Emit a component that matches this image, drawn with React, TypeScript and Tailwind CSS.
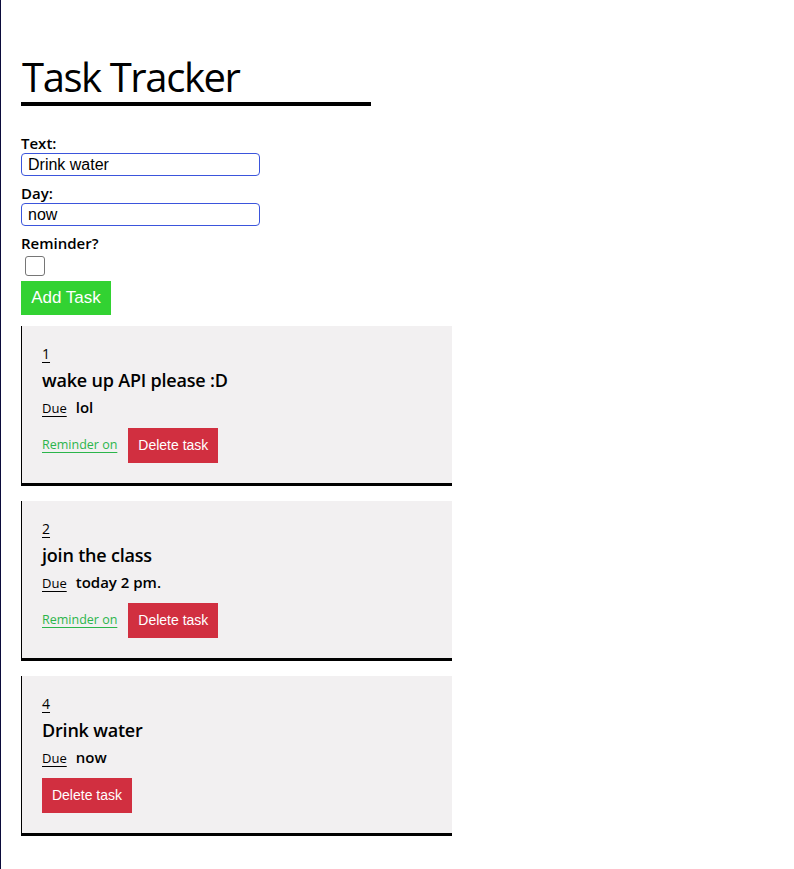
import { useState } from "react"

interface Task {
  id: number
  text: string
  day: string
  reminder: boolean
}

const initialTasks: Task[] = [
  { id: 1, text: "wake up API please :D", day: "lol", reminder: true },
  { id: 2, text: "join the class", day: "today 2 pm.", reminder: true },
  { id: 4, text: "Drink water", day: "now", reminder: false },
]

function TaskCard({ task, onDelete }: { task: Task; onDelete: (id: number) => void }) {
  return (
    <div className="w-[431px] h-[160px] bg-[#f2f0f1] border-l border-l-black border-b-[3px] border-b-black pl-[20px] pt-[19px]">
      <div className="text-[14px] leading-[18px] underline underline-offset-[3px]">{task.id}</div>
      <h3 className="mt-[5px] text-[18px] leading-[24px] font-semibold tracking-[-0.2px]">{task.text}</h3>
      <div className="mt-[4px] flex items-baseline gap-[9px]">
        <span className="text-[13px] underline underline-offset-[3px]">Due</span>
        <span className="text-[15px] font-semibold">{task.day}</span>
      </div>
      <div className="mt-[9px] flex items-center gap-[11px]">
        {task.reminder && (
          <span className="text-[12.5px] text-[#2bb54b] underline underline-offset-[3px]">Reminder on</span>
        )}
        <button
          onClick={() => onDelete(task.id)}
          className="h-[35px] w-[90px] bg-[#d12f40] text-white text-[14px] font-['Liberation_Sans',Arial,sans-serif]"
        >
          Delete task
        </button>
      </div>
    </div>
  )
}

export default function App() {
  const [text, setText] = useState("Drink water")
  const [day, setDay] = useState("now")
  const [reminder, setReminder] = useState(false)
  const [tasks, setTasks] = useState<Task[]>(initialTasks)

  return (
    <div className="min-h-[869px] border-l border-l-[#0b0b3b] pl-[20px] pt-[55px] text-black font-['Open_Sans','Noto_Sans',sans-serif]">
      <h1 className="text-[40px] leading-[44px] tracking-[-1.4px] w-[350px] border-b-4 border-black pb-[3px] pl-[1px]">Task Tracker</h1>

      <form className="mt-[28px]" onSubmit={(e) => e.preventDefault()}>
        <label className="block text-[15px] leading-[18px] font-semibold">Text:</label>
        <input
          value={text}
          onChange={(e) => setText(e.target.value)}
          className="block mt-[1px] w-[239px] h-[23px] border border-[#3b55dc] rounded-[4px] px-[6px] text-[16px] font-['Liberation_Sans',Arial,sans-serif] outline-none"
        />
        <label className="block mt-[8px] text-[15px] leading-[18px] font-semibold">Day:</label>
        <input
          value={day}
          onChange={(e) => setDay(e.target.value)}
          className="block mt-[1px] w-[239px] h-[23px] border border-[#3b55dc] rounded-[4px] px-[6px] text-[16px] font-['Liberation_Sans',Arial,sans-serif] outline-none"
        />
        <label className="block mt-[8px] text-[15px] leading-[18px] font-semibold">Reminder?</label>
        <input
          type="checkbox"
          checked={reminder}
          onChange={(e) => setReminder(e.target.checked)}
          className="block mt-[4px] ml-[4px] w-[20px] h-[20px] appearance-none border border-[#767676] rounded-[3px] bg-white"
        />
        <button className="mt-[5px] block w-[90px] h-[34px] bg-[#32d232] text-white text-[17px] font-['Liberation_Sans',Arial,sans-serif]">
          Add Task
        </button>
      </form>

      <div className="mt-[11px] flex flex-col gap-[15px]">
        {tasks.map((t) => (
          <TaskCard key={t.id} task={t} onDelete={(id) => setTasks(tasks.filter((x) => x.id !== id))} />
        ))}
      </div>
    </div>
  )
}
